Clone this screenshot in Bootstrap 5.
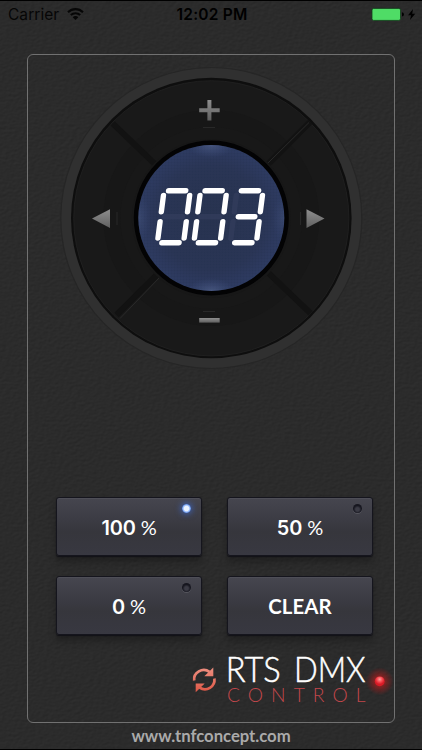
<!DOCTYPE html>
<html lang="en">
<head>
<meta charset="utf-8">
<meta name="viewport" content="width=device-width, initial-scale=1">
<title>RTS DMX Control</title>
<link href="https://cdn.jsdelivr.net/npm/bootstrap@5.3.0/dist/css/bootstrap.min.css" rel="stylesheet">
<style>
body{width:422px;height:750px;overflow:hidden;background:#2b2b2b;font-family:Inter,"Liberation Sans",sans-serif}
.screen{width:422px;height:750px;border-top:1px solid #000;border-bottom:1px solid #000;isolation:isolate}
.leather{z-index:-1;width:422px;height:748px}
.status{height:53px;padding:5px 6px 0 8px;font-size:15.5px;line-height:18px;color:#000}
.status .side{flex:1 1 0}
.clock{font-weight:600;letter-spacing:.2px;font-size:15.5px}
.carrier{letter-spacing:.05px;color:#060606}
.panel{width:368.500px;height:669px;margin-left:26.500px;border:1px solid #717171;border-radius:6px}
.dial{width:308px;height:308px;margin:9px 0 0 30.300px}
.pads{display:grid;grid-template-columns:146px 146px;column-gap:25px;row-gap:20.500px;margin:125px 0 0 28.500px}
.pad{height:58.500px;padding:1.500px 0 0;border:1.500px solid #15151d;border-radius:3px;color:#fff;font:600 19.900px/55px Inter,sans-serif;letter-spacing:-.1px;background:linear-gradient(#46464f,#3b3b43 40%,#36363c 60%,#383841);box-shadow:inset 0 1px 0 #4e4e57,0 1px 1px #111117,0 6px 7px rgba(0,0,0,.25)}
.pad:hover{color:#fff}
.pad .pc{font-family:Lato,sans-serif;font-weight:400;font-size:20px}
.pad .word{font-family:Lato,sans-serif;font-weight:700;font-size:20.400px;letter-spacing:.1px}
.led{right:10px;top:5.500px;width:9px;height:9px;border-radius:50%;background:radial-gradient(circle at 50% 60%,#3b3b45 0 25%,#16161f 55%);box-shadow:0 1px 0 #55555d}
.led.on{background:radial-gradient(circle,#e9f2ff 0 35%,#7fa9f5 60%,#2c58b8 82%);box-shadow:0 0 6px 1px rgba(58,110,225,.7);top:6px}
.brand{width:212px;height:66px;margin:12.500px 0 0 158.500px}
.foot{font:700 16.700px/20px Lato,sans-serif;color:#aaa;margin-top:3px;letter-spacing:-.03px}
</style>
<script src="https://cdn.jsdelivr.net/npm/bootstrap@5.3.0/dist/js/bootstrap.bundle.min.js"></script>
</head>
<body>
<div class="screen position-relative d-flex flex-column">
  <svg class="leather position-absolute top-0 start-0" aria-hidden="true">
    <filter id="grain" x="0" y="0" width="100%" height="100%" color-interpolation-filters="sRGB">
      <feTurbulence type="fractalNoise" baseFrequency=".24 .4" numOctaves="3" seed="4"/>
      <feDiffuseLighting surfaceScale=".22" diffuseConstant="1" lighting-color="#3b3b3b"><feDistantLight azimuth="230" elevation="47"/></feDiffuseLighting>
    </filter>
    <rect width="422" height="748" filter="url(#grain)"/>
  </svg>

  <header class="status d-flex align-items-start">
    <div class="side d-flex">
      <span class="carrier">Carrier</span>
      <svg class="ms-2" width="17" height="18" viewBox="0 0 17 18" fill="none" stroke="#060606" stroke-width="2.1">
        <path d="M1 6.200C5.200 2.100 11.800 2.100 16 6.200M3.800 9.100c2.700-2.500 6.700-2.500 9.400 0"/>
        <path d="M5.700 11.200c1.600-1.500 4-1.500 5.600 0L8.500 14z" fill="#060606" stroke="none"/>
      </svg>
    </div>
    <span class="clock">12:02 PM</span>
    <div class="side d-flex justify-content-end">
      <svg width="46" height="18" viewBox="0 0 46 18">
        <rect x="2" y="2.400" width="28.500" height="12" rx="1.600" fill="#4fdc66" stroke="#123d1a" stroke-width=".8"/>
        <path d="M32 6.200q2 .6 2 2.200t-2 2.200z" fill="#000"/>
        <path d="M43 3l-5 6.200h3L40 14l5.200-6.300h-3z" fill="#000"/>
      </svg>
    </div>
  </header>

  <main class="panel d-flex flex-column flex-shrink-0">
    <svg class="dial flex-shrink-0" viewBox="58 64 308 308">
      <defs>
        <linearGradient id="metal" x1="0" y1="0" x2="0" y2="1"><stop offset="0" stop-color="#8e8e8e"/><stop offset="1" stop-color="#606060"/></linearGradient>
        <radialGradient id="glass"><stop offset="0" stop-color="#283350"/><stop offset=".7" stop-color="#2a3555"/><stop offset="1" stop-color="#2e3b62"/></radialGradient>
        <radialGradient id="glow"><stop offset="0" stop-color="#65769f" stop-opacity=".5"/><stop offset="1" stop-color="#4a5c90" stop-opacity="0"/></radialGradient>
        <pattern id="pixels" width="3" height="3" patternUnits="userSpaceOnUse"><path d="M0 0H3M0 0V3" stroke="#1f2a48" stroke-width=".6" opacity=".4"/></pattern>
        <clipPath id="lens"><circle cx="211.300" cy="218" r="73"/></clipPath>
      </defs>
      <circle cx="211.300" cy="218" r="150.500" fill="#303030" stroke="#262626" stroke-width="1.200"/>
      <circle cx="211.300" cy="218" r="140.300" fill="#0e0e0e"/>
      <circle cx="211.300" cy="218.300" r="137.600" fill="#191919" stroke="#222" stroke-width=".8"/>
      <circle cx="211.300" cy="218" r="108" fill="#171717"/>
      <circle cx="211.300" cy="218" r="91" fill="#181818"/>
      <g stroke="#121212" stroke-width="6">
        <path d="M112.600 123.400l198 190"/><path d="M310 122.200L116.500 315"/>
      </g>
      <path d="M309 122.500L268 163M160 277L120 318.500" stroke="#292929" stroke-width="1"/>
      <circle cx="211.300" cy="218.500" r="79.500" fill="#171717"/>
      <circle cx="211.300" cy="218" r="77.500" fill="#030304"/>
      <circle cx="211.300" cy="218" r="73" fill="url(#glass)"/>
      <g clip-path="url(#lens)">
        <circle cx="211.300" cy="218" r="73" fill="url(#pixels)"/>
        <ellipse cx="211" cy="144" rx="24" ry="14" fill="url(#glow)"/>
        <ellipse cx="211" cy="292" rx="24" ry="14" fill="url(#glow)"/>
        <ellipse cx="138" cy="218" rx="13" ry="25" fill="url(#glow)" opacity=".5"/>
        <ellipse cx="285" cy="218" rx="13" ry="25" fill="url(#glow)" opacity=".5"/>
      </g>
      <!-- segment display: unlit segments faint, lit segments white -->
      <g role="img" aria-label="003" stroke="#fff" stroke-width="5.400" stroke-linecap="round" fill="none" transform="translate(210.300 216.700) skewX(-7.300)">
        <g stroke="#35405f" opacity=".6"><path d="M-46 0h18M-9.500 0h19M23.300-21.500v16.500M23.300 5v16.500"/></g>
        <g id="zero">
          <path d="M-8.600-26H8.600M-8.600 26H8.600M-13.100-21.300V-5M13.100-21.300V-5M-13.100 5V21.300M13.100 5V21.300"/>
        </g>
        <use href="#zero" x="-36.500"/>
        <path d="M27.700-26h17.300M27.700 26h17.300M28 0h16.500M49.400-21.300V-5M49.400 5V21.300"/>
      </g>
      <path d="M207.400 100h4v8.200h8.300v4h-8.300v8.200h-4v-8.200h-8.200v-4h8.200z" fill="url(#metal)"/>
      <rect x="199.200" y="318" width="20.500" height="4.600" fill="url(#metal)"/>
      <path d="M92 218.500l18-9.200v18.600z" fill="url(#metal)"/>
      <path d="M324.500 218.500l-18-9.200v18.600z" fill="url(#metal)"/>
      <path d="M203 127.500h12M203 311.500h12M117 212v13M300.500 212v13" stroke="#282828"/>
    </svg>

    <div class="pads flex-shrink-0">
      <button class="pad btn position-relative">100 <span class="pc">%</span><i class="led on position-absolute"></i></button>
      <button class="pad btn position-relative">50 <span class="pc">%</span><i class="led position-absolute"></i></button>
      <button class="pad btn position-relative">0 <span class="pc">%</span><i class="led position-absolute"></i></button>
      <button class="pad btn position-relative"><span class="word">CLEAR</span></button>
    </div>

    <svg class="brand flex-shrink-0" viewBox="186 648 212 66">
      <defs>
        <linearGradient id="coral" x1="0" y1="668" x2="0" y2="693" gradientUnits="userSpaceOnUse"><stop offset="0" stop-color="#ef9182"/><stop offset="1" stop-color="#dd5746"/></linearGradient>
        <radialGradient id="halo"><stop offset=".2" stop-color="#d61c1c" stop-opacity=".65"/><stop offset="1" stop-color="#c01010" stop-opacity="0"/></radialGradient>
        <radialGradient id="bulb" cx=".5" cy=".3"><stop offset="0" stop-color="#ff9d97"/><stop offset=".6" stop-color="#f4414a"/><stop offset="1" stop-color="#d81b26"/></radialGradient>
      </defs>
      <g fill="none" stroke="url(#coral)" stroke-width="2.700">
        <path d="M194.200 681.500C193.200 673.500 202.500 668.200 209.500 672.800"/>
        <path d="M214.400 679.500C215.400 687.800 206.500 693 199.500 688.600"/>
      </g>
      <path d="M213.300 668.500v8.700h-9zM195.700 693.200v-8.800h9z" fill="url(#coral)"/>
      <g font-family="Lato, sans-serif">
        <g font-size="35" font-weight="300" fill="#fff" stroke="#fff" stroke-width=".5">
          <text x="225.800" y="682.500" textLength="55" lengthAdjust="spacingAndGlyphs">RTS</text>
          <text x="294" y="682.500" textLength="71.500" lengthAdjust="spacingAndGlyphs">DMX</text>
        </g>
        <text x="227" y="702.700" font-size="19.300" font-weight="300" fill="#c2474b" textLength="138.500" lengthAdjust="spacing">CONTROL</text>
      </g>
      <circle cx="379.700" cy="682.300" r="14" fill="url(#halo)"/>
      <circle cx="379.700" cy="682.300" r="4.900" fill="url(#bulb)"/>
    </svg>
  </main>
  <footer class="foot text-center">www.tnfconcept.com</footer>
</div>
</body>
</html>
